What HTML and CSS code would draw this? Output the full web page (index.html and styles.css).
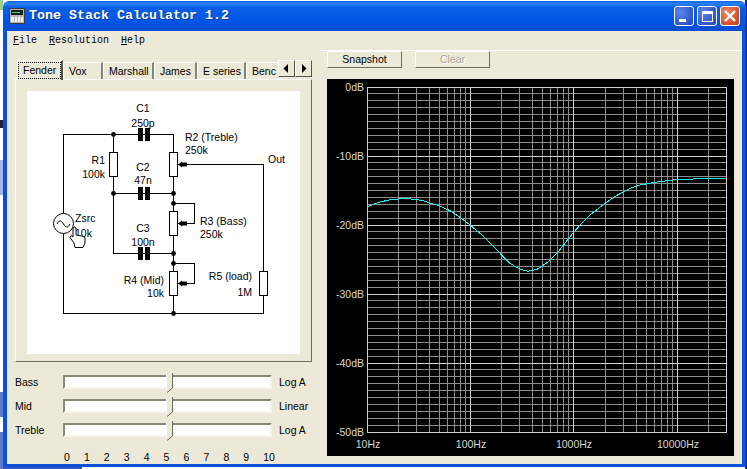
FILE: index.html
```html
<!DOCTYPE html>
<html lang="en">
<head>
<meta charset="utf-8">
<title>Tone Stack Calculator 1.2</title>
<link rel="stylesheet" href="styles.css">
</head>
<body>
<div class="desktop">
  <div class="window">
    <header class="titlebar">
      <svg class="appicon" width="16" height="16" viewBox="0 0 16 16">
        <rect x="0.5" y="0.5" width="15" height="15" fill="#b8b8b0" stroke="#3a3a3a"/>
        <rect x="2" y="2" width="12" height="5" fill="#10201a"/>
        <rect x="3" y="4" width="8" height="1" fill="#40d070"/>
        <path d="M2 9h3v5H2zM6 9h2v5H6zM9 9h2v5H9zM12 9h2v5h-2z" fill="#f0f0f0"/>
      </svg>
      <span class="title">Tone Stack Calculator 1.2</span>
      <div class="caption">
        <span class="capbtn"><svg width="18" height="18" viewBox="0 0 18 18"><rect x="4" y="12" width="7" height="3" fill="#fff"/></svg></span>
        <span class="capbtn"><svg width="18" height="18" viewBox="0 0 18 18"><path d="M4 4h11v11H4zM5 7v7h9V7z" fill="#fff" fill-rule="evenodd"/></svg></span>
        <span class="capbtn close"><svg width="18" height="18" viewBox="0 0 18 18"><path d="M4 4l10 10M14 4L4 14" stroke="#fff" stroke-width="2.4" fill="none"/></svg></span>
      </div>
    </header>
    <div class="client">
      <nav class="menubar">
        <span class="menu"><u>F</u>ile</span>
        <span class="menu"><u>R</u>esolution</span>
        <span class="menu"><u>H</u>elp</span>
      </nav>
      <div class="main">
        <section class="left">
          <div class="tabs">
            <span class="tab active"><span class="focus">Fender</span></span>
            <span class="tab w-vox">Vox</span>
            <span class="tab w-marshall">Marshall</span>
            <span class="tab w-james">James</span>
            <span class="tab w-eseries">E series</span>
            <span class="tab w-bench">Benc</span>
            <span class="arrow"><svg width="7" height="9" viewBox="0 0 7 9"><path d="M5 0v9L0.5 4.5z" fill="#000"/></svg></span>
            <span class="arrow"><svg width="7" height="9" viewBox="0 0 7 9"><path d="M2 0v9l4.5-4.5z" fill="#000"/></svg></span>
          </div>
          <div class="panel">
            <svg class="schematic" width="273" height="263" viewBox="27 91 273 263">
              <path class="wire" d="M63.5 213V134.5H173.5V152M63.5 234V313.5H263.5V295M113.5 134.5V152M113.5 177V253.5H173.5M173.5 177V211M173.5 235V271M173.5 295V313.5M173.5 193.5H113.5M178 164.5H263.5V271M173.5 203.5H194V223.5H178M173.5 263.5H194V283.5H178"/>
              <rect class="part" x="109.5" y="152.5" width="8" height="24"/>
              <rect class="part" x="169.5" y="152.5" width="8" height="24"/>
              <rect class="part" x="169.5" y="211.5" width="8" height="24"/>
              <rect class="part" x="169.5" y="271.5" width="8" height="24"/>
              <rect class="part" x="259.5" y="271.5" width="8" height="24"/>
              <path class="fill" d="M138 128h5v13h-5zM145 128h5v13h-5zM138 187h5v13h-5zM145 187h5v13h-5zM138 247h5v13h-5zM145 247h5v13h-5z"/>
              <path class="fill" d="M178 164.5l4-3v1h5v4h-5v1zM178 223.5l4-3v1h5v4h-5v1zM178 283.5l4-3v1h5v4h-5v1z"/>
              <g class="fill">
                <circle cx="113.5" cy="134.5" r="2.4"/>
                <circle cx="113.5" cy="193.5" r="2.4"/>
                <circle cx="173.5" cy="193.5" r="2.4"/>
                <circle cx="173.5" cy="203.5" r="2.4"/>
                <circle cx="173.5" cy="253.5" r="2.4"/>
                <circle cx="173.5" cy="263.5" r="2.4"/>
                <circle cx="173.5" cy="313.5" r="2.4"/>
              </g>
              <circle class="source" cx="63.5" cy="223.5" r="10"/>
              <path class="sine" d="M57 224c2-4 4-4 6.500 0s4.500 4 6.500 0"/>
              <g class="label">
                <text x="143" y="112" text-anchor="middle">C1</text>
                <text x="143" y="127" text-anchor="middle">250p</text>
                <text x="143" y="171" text-anchor="middle">C2</text>
                <text x="143" y="184" text-anchor="middle">47n</text>
                <text x="143" y="232" text-anchor="middle">C3</text>
                <text x="143" y="246" text-anchor="middle">100n</text>
                <text x="105" y="164" text-anchor="end">R1</text>
                <text x="105" y="178" text-anchor="end">100k</text>
                <text x="185" y="141">R2 (Treble)</text>
                <text x="185" y="154">250k</text>
                <text x="268" y="163">Out</text>
                <text x="200" y="225">R3 (Bass)</text>
                <text x="200" y="238">250k</text>
                <text x="164" y="284" text-anchor="end">R4 (Mid)</text>
                <text x="164" y="297" text-anchor="end">10k</text>
                <text x="252" y="280" text-anchor="end">R5 (load)</text>
                <text x="252" y="296" text-anchor="end">1M</text>
                <text x="75" y="222">Zsrc</text>
                <text x="75" y="237">10k</text>
              </g>
              <path class="hand" d="M75 247.500L74 243L70 237.500L71 235.500L73 237V228L74.500 227L76 228V235L79 235.500L82 236L85 237.500V243L83 247.500Z"/>
            </svg>
          </div>
          <div class="sliders">
            <div class="slider">
              <span class="slabel">Bass</span>
              <div class="track"><svg class="thumb" width="7" height="20" viewBox="0 0 7 20"><path d="M0 0H7V15L1 20H0Z" fill="#ece9d8"/><path d="M6.500 0V15L1 19.500" fill="none" stroke="#6e6c60"/><path d="M0.500 0V17" stroke="#fff"/></svg></div>
              <span class="svalue">Log A</span>
            </div>
            <div class="slider">
              <span class="slabel">Mid</span>
              <div class="track"><svg class="thumb" width="7" height="20" viewBox="0 0 7 20"><path d="M0 0H7V15L1 20H0Z" fill="#ece9d8"/><path d="M6.500 0V15L1 19.500" fill="none" stroke="#6e6c60"/><path d="M0.500 0V17" stroke="#fff"/></svg></div>
              <span class="svalue">Linear</span>
            </div>
            <div class="slider">
              <span class="slabel">Treble</span>
              <div class="track"><svg class="thumb" width="7" height="20" viewBox="0 0 7 20"><path d="M0 0H7V15L1 20H0Z" fill="#ece9d8"/><path d="M6.500 0V15L1 19.500" fill="none" stroke="#6e6c60"/><path d="M0.500 0V17" stroke="#fff"/></svg></div>
              <span class="svalue">Log A</span>
            </div>
          </div>
          <div class="ticks">
            <span>0</span><span>1</span><span>2</span><span>3</span><span>4</span><span>5</span><span>6</span><span>7</span><span>8</span><span>9</span><span>10</span>
          </div>
        </section>
        <section class="right">
          <div class="buttons">
            <span class="btn">Snapshot</span>
            <span class="btn disabled">Clear</span>
          </div>
          <svg class="plot" width="407" height="377" viewBox="327 79 407 377">
            <defs>
              <path id="hband" d="M367 93.500H727M367 100.500H727M367 107.500H727M367 114.500H727M367 121.500H727M367 128.500H727M367 135.500H727M367 142.500H727M367 149.500H727"/>
            </defs>
            <g class="minor">
              <use href="#hband"/>
              <use href="#hband" y="69"/>
              <use href="#hband" y="138"/>
              <use href="#hband" y="207"/>
              <use href="#hband" y="276"/>
              <path d="M398.500 87V432M416.500 87V432M429.500 87V432M439.500 87V432M447.500 87V432M454.500 87V432M460.500 87V432M465.500 87V432M501.500 87V432M519.500 87V432M532.500 87V432M542.500 87V432M550.500 87V432M557.500 87V432M563.500 87V432M568.500 87V432M605.500 87V432M623.500 87V432M636.500 87V432M646.500 87V432M654.500 87V432M661.500 87V432M667.500 87V432M672.500 87V432M708.500 87V432"/>
            </g>
            <path class="major" d="M367 87.500H727M367 156.500H727M367 225.500H727M367 294.500H727M367 363.500H727M367 432.500H727M367.500 87V433M470.500 87V433M573.500 87V433M677.500 87V433M726.500 87V433"/>
            <path class="curve" d="M367 207L373 204.500L380 202L389 200L398 199L408 198.800L417 199.500L424 201L430 203L440 206L450 210.700L460 217.300L470 225L480 233.300L490 243.300L500 253.300L510 263.300L515 266.500L520 269.300L528 271.300L537 269.300L547 262.700L557 253.300L569 238L573 233L581 224L590 215L599 208L607 202L615 196.500L623 192L631 188L640 185L657 182L673 180L693 179L726 178.500"/>
            <g class="plotlabel">
              <text x="364" y="91" text-anchor="end">0dB</text>
              <text x="364" y="160" text-anchor="end">-10dB</text>
              <text x="364" y="229" text-anchor="end">-20dB</text>
              <text x="364" y="298" text-anchor="end">-30dB</text>
              <text x="364" y="367" text-anchor="end">-40dB</text>
              <text x="364" y="436" text-anchor="end">-50dB</text>
              <text x="368" y="448" text-anchor="middle">10Hz</text>
              <text x="471" y="448" text-anchor="middle">100Hz</text>
              <text x="574" y="448" text-anchor="middle">1000Hz</text>
              <text x="678" y="448" text-anchor="middle">10000Hz</text>
            </g>
          </svg>
        </section>
      </div>
    </div>
  </div>
</div>
</body>
</html>
```
FILE: styles.css
```css
* { box-sizing: border-box; }
html, body { margin: 0; padding: 0; }
body { width: 747px; height: 469px; overflow: hidden; font: 10.5px/14px "Liberation Sans", Arial, sans-serif; color: #000; }

.desktop {
  position: relative;
  width: 747px;
  height: 469px;
  background:
    linear-gradient(#9bd08a 0 10px, #fff 10px 120px, #223 120px 128px, #fff 128px 160px, #a8b4e0 160px 195px, #fff 195px 392px, #5f78c8 392px 417px, #fff 417px 432px, #5f78c8 432px 469px) 0 0 / 3px 469px no-repeat,
    linear-gradient(#2f55c8, #2f55c8) 0 467px / 82px 2px no-repeat,
    linear-gradient(#0a2a8c, #0a2a8c) 745px 0 / 2px 469px no-repeat,
    #fff;
}

.window {
  position: absolute;
  left: 3px;
  top: 1px;
  width: 743px;
  height: 466px;
  display: flex;
  flex-direction: column;
  border-radius: 6px 6px 0 0;
  overflow: hidden;
}

.titlebar {
  height: 30px;
  flex: none;
  display: flex;
  align-items: center;
  padding: 0 6px;
  background: linear-gradient(#0a5ae0 0, #2a84f4 8%, #0a5fe8 22%, #0055e5 70%, #0a4cd0 100%);
}
.appicon { flex: none; margin-right: 4px; }
.title {
  flex: 1;
  color: #fff;
  font: bold 13.33px/16px "Liberation Mono", monospace;
  text-shadow: 1px 1px 0 #0a3a9c;
}
.caption { display: flex; gap: 3px; }
.capbtn {
  width: 20px;
  height: 20px;
  border: 1px solid #fff;
  border-radius: 3px;
  background: radial-gradient(circle at 30% 30%, #5a86e8, #2a50c8 80%);
  display: block;
}
.capbtn svg { display: block; margin: 0; }
.capbtn.close { background: radial-gradient(circle at 30% 30%, #e8886a, #d0481e 80%); }

.client {
  flex: 1;
  display: flex;
  flex-direction: column;
  min-height: 0;
  background: #ece9d8;
  border: solid #0a50d8;
  border-width: 0 4px 3px;
}

.menubar {
  height: 19px;
  flex: none;
  display: flex;
  gap: 12px;
  align-items: center;
  padding-left: 6px;
  font: 10px/14px "Liberation Mono", monospace;
}

.main { flex: 1; display: flex; min-height: 0; }

.left { width: 313px; flex: none; padding: 10px 0 0 8px; }

.tabs { display: flex; height: 19px; padding-left: 2px; align-items: flex-start; position: relative; z-index: 1; }
.tab {
  height: 17px;
  margin-top: 2px;
  padding: 1px 0 0 5px;
  border-top: 1px solid #fff;
  border-left: 1px solid #fff;
  border-right: 2px solid #86847a;
  flex: none;
}
.tab.active {
  width: 46px;
  height: 20px;
  margin-top: 0;
  padding: 0;
  background: #ece9d8;
  border-right: 2px solid #55534a;
}
.focus { display: block; height: 17px; margin: 1px 0 0 0; padding: 1px 0 0 5px; outline: 1px dotted #000; outline-offset: -1px; }
.w-vox { width: 40px; }
.w-marshall { width: 51px; }
.w-james { width: 43px; }
.w-eseries { width: 49px; }
.w-bench { width: 32px; border-right: 0; overflow: hidden; }
.arrow {
  width: 17px;
  height: 17px;
  flex: none;
  display: flex;
  align-items: center;
  justify-content: center;
  background: #ece9d8;
  border: 1px solid;
  border-color: #fff #55534a #55534a #fff;
}

.panel {
  width: 297px;
  height: 283px;
  padding: 11px 11px 0 11px;
  border: 1px solid;
  border-color: #fff #6e6c60 #6e6c60 #fff;
}
.schematic { display: block; background: #fff; }
.wire { fill: none; stroke: #000; stroke-width: 1; shape-rendering: crispEdges; }
.part { fill: #fff; stroke: #000; stroke-width: 1; shape-rendering: crispEdges; }
.fill { fill: #000; }
.source { fill: #fff; stroke: #000; }
.sine { fill: none; stroke: #000; }
.label { font: 10.5px "Liberation Sans", Arial, sans-serif; fill: #000; }
.hand { fill: #fff; stroke: #000; stroke-width: 1; stroke-linejoin: round; }

.sliders { margin-top: 13px; display: flex; flex-direction: column; gap: 10px; }
.slider { display: flex; align-items: center; height: 14px; }
.slabel { width: 48px; flex: none; }
.track {
  width: 209px;
  height: 14px;
  flex: none;
  position: relative;
  background: #fff;
  border: 2px solid;
  border-color: #8a887a #f6f5ec #f6f5ec #8a887a;
}
.thumb { position: absolute; left: 101px; top: -4px; display: block; }
.svalue { margin-left: 7px; }

.ticks { display: flex; justify-content: space-between; width: 211px; margin: 13px 0 0 49px; }

.right { flex: 1; padding-left: 7px; border-top: 1px solid #fff; }
.buttons { display: flex; gap: 13px; }
.btn {
  width: 75px;
  height: 17px;
  line-height: 15px;
  text-align: center;
  background: #ece9d8;
  border: 1px solid;
  border-color: #fff #6e6c60 #6e6c60 #fff;
}
.btn.disabled { color: #a8a698; text-shadow: 1px 1px 0 #fff; }

.plot { display: block; margin-top: 11px; background: #000; }
.minor { fill: none; stroke: #8e8e8e; stroke-width: 1; shape-rendering: crispEdges; }
.major { fill: none; stroke: #d0d0d0; stroke-width: 1; shape-rendering: crispEdges; }
.curve { fill: none; stroke: #1ef0f4; stroke-width: 1; shape-rendering: crispEdges; }
.plotlabel { font: 10.5px "Liberation Sans", Arial, sans-serif; fill: #d8d8d0; }
```
